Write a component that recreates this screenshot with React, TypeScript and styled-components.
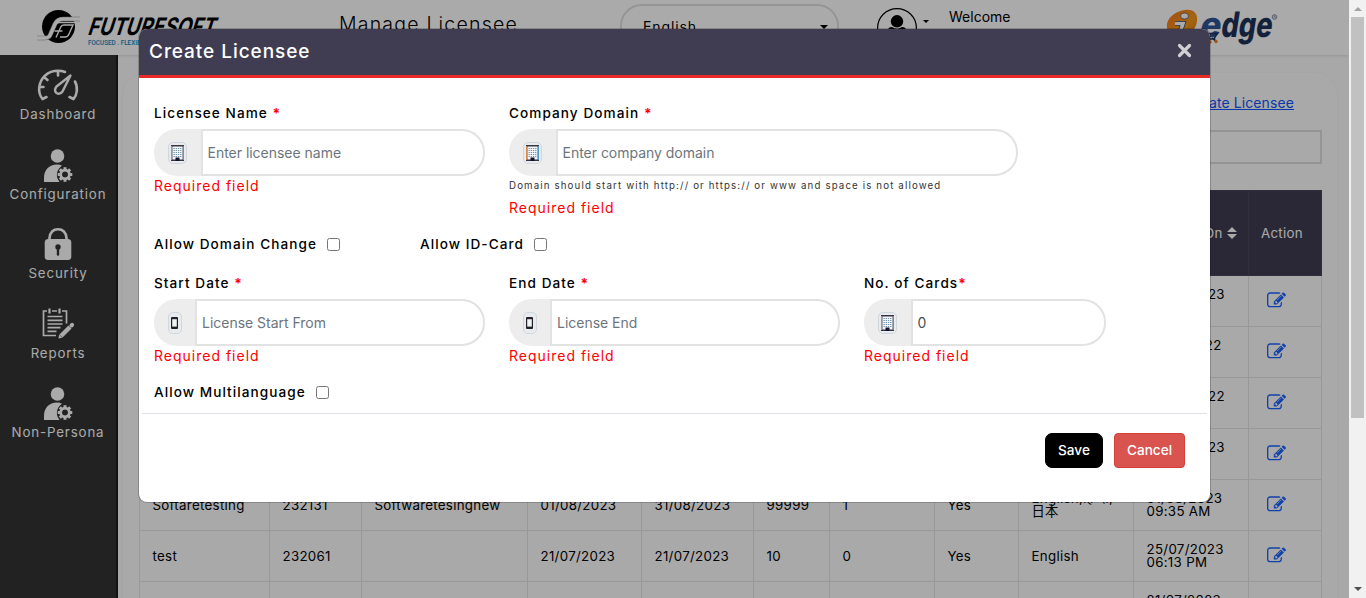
import React from "react";
import styled, { createGlobalStyle } from "styled-components";

const Global = createGlobalStyle`
  * { box-sizing: border-box; }
  body { margin: 0; overflow: hidden; font-family: Inter, "Noto Sans", "Noto Sans CJK JP", sans-serif; }
`;

const Window = styled.div`
  position: relative;
  display: flex;
  width: 1366px;
  height: 598px;
  overflow: hidden;
  background: #fff;
`;
const Page = styled.div`
  width: 1349px;
  height: 598px;
  overflow: hidden;
  background: #fdfdfd;
`;
const Header = styled.header`
  display: flex;
  align-items: flex-start;
  height: 55px;
  background: #fff;
  box-shadow: 0 1px 3px rgba(0, 0, 0, 0.12);
  > * { flex: none; }
`;
const BrandMark = styled.div`
  width: 339px;
  padding: 6px 0 0 32px;
  svg { display: block; }
`;
const ProductMark = styled.div`
  margin-top: 6px;
  svg { display: block; }
`;
const PageTitle = styled.h1`
  width: 281px;
  margin: 12px 0 0;
  font-size: 19.5px;
  line-height: 24px;
  font-weight: 300;
  letter-spacing: 1.2px;
  color: #000;
  white-space: nowrap;
`;
const LanguageSelect = styled.div`
  display: flex;
  justify-content: space-between;
  width: 219px;
  height: 46px;
  margin-top: 4px;
  padding: 11px 9px 0 21px;
  border: 2px solid #e0e0e0;
  border-radius: 22px;
  font-size: 14px;
  line-height: 20px;
  letter-spacing: 0.9px;
`;
const Caret = styled.span<{ $size: number; $top: number }>`
  width: 0;
  height: 0;
  margin-top: ${(p) => p.$top}px;
  border: ${(p) => p.$size}px solid transparent;
  border-top-color: #000;
  border-bottom: 0;
`;
const Avatar = styled.div`
  width: 40px;
  height: 40px;
  margin: 8px 6px 0 38px;
  svg { display: block; }
`;
const Welcome = styled.span`
  width: 215px;
  margin: 8px 0 0 20px;
  font-size: 14px;
  line-height: 18px;
`;
const Body = styled.div`
  display: flex;
  height: 543px;
`;
const Sidebar = styled.nav`
  width: 118px;
  flex: none;
  padding: 11px 0;
  background: #333;
  border-right: 2px solid #1c1a1e;
  color: #fff;
`;
const NavItem = styled.a`
  display: flex;
  flex-direction: column;
  align-items: center;
  height: 79.5px;
  svg { display: block; margin-bottom: 1px; }
`;
const NavLabel = styled.span`
  font-size: 13.3px;
  line-height: 16px;
  letter-spacing: 0.86px;
  white-space: nowrap;
`;
const Content = styled.main`
  flex: 1;
  padding: 18px 12px 0 5px;
`;
const Card = styled.section`
  height: 540px;
  padding: 20px 15px 0 16px;
  border-radius: 24px 24px 0 0;
  background: #fefefe;
  box-shadow: 0 0 6px rgba(0, 0, 0, 0.03);
`;
const LinkRow = styled.div`
  display: flex;
  justify-content: flex-end;
  height: 37px;
  padding-right: 28px;
`;
const CreateLink = styled.a`
  font-size: 14px;
  line-height: 20px;
  color: #0d55ff;
  text-decoration: underline;
  letter-spacing: 0.1px;
`;
const SearchBox = styled.div`
  height: 34px;
  border: 2px solid #dedede;
  margin-bottom: 26px;
`;
const Table = styled.table`
  width: 1183px;
  table-layout: fixed;
  border-collapse: collapse;
  font-size: 13.3px;
  line-height: 13px;
  letter-spacing: 0.3px;
`;
const HeadCell = styled.th`
  height: 85px;
  padding: 0 0 0 12px;
  background: #403d53;
  border: 1px solid #484558;
  color: #fff;
  font-weight: 400;
  text-align: left;
  white-space: nowrap;
`;
const Cell = styled.td`
  height: 51px;
  padding: 0 0 0 12.5px;
  border: 1px solid #e4e4e4;
  color: #000;
  white-space: pre;
`;
const HeadContent = styled.span`
  display: flex;
  align-items: center;
  gap: 4px;
  padding-left: 2px;
`;
const EditIconBox = styled.span`
  display: block;
  padding: 0 0 1px 5px;
  svg { display: block; }
`;

const ScrollTrack = styled.div`
  display: flex;
  flex-direction: column;
  align-items: center;
  justify-content: space-between;
  width: 17px;
  height: 598px;
  padding: 7px 2px;
  background: #f1f1f1;
`;
const ScrollThumb = styled.div`
  width: 13px;
  height: 401px;
  margin-top: 6px;
  margin-bottom: auto;
  background: #c1c1c1;
`;

const Overlay = styled.div`
  position: absolute;
  top: 0;
  left: 0;
  width: 1349px;
  height: 598px;
  padding: 29px 0 0 139px;
  background: rgba(0, 0, 0, 0.333);
`;
const Dialog = styled.div`
  width: 1071px;
  height: 473px;
  border-radius: 8px;
  background: #fff;
  box-shadow: 0 0 0 1px rgba(0, 0, 0, 0.2);
  overflow: hidden;
`;
const DialogHeader = styled.div`
  display: flex;
  justify-content: space-between;
  height: 49px;
  padding: 10px 19px 0 10px;
  background: #403d53;
  border-bottom: 3px solid #e92a26;
`;
const DialogTitle = styled.h2`
  margin: 0;
  font-size: 19px;
  line-height: 25px;
  font-weight: 500;
  letter-spacing: 0.95px;
  color: #fff;
`;
const CloseButton = styled.button`
  width: 15px;
  height: 15px;
  margin-top: 4px;
  margin-right: -1px;
  padding: 0;
  border: 0;
  background: none;
  svg { display: block; }
`;
const Form = styled.form`
  height: 336px;
  margin: 0 3px;
  padding: 25px 0 0 12px;
  border-bottom: 1px solid #dee2e6;
`;
const FieldRow = styled.div<{ $height: number }>`
  display: flex;
  height: ${(p) => p.$height}px;
`;
const Field = styled.div<{ $width: number }>`
  width: ${(p) => p.$width}px;
  flex: none;
`;
const Label = styled.label`
  display: block;
  height: 26px;
  font-size: 13.6px;
  line-height: 20px;
  font-weight: 550;
  letter-spacing: 1.06px;
  color: #000;
  white-space: nowrap;
  b { color: #f00; font-weight: 700; }
`;
const InputGroup = styled.div<{ $width: number }>`
  display: flex;
  width: ${(p) => p.$width}px;
  height: 47px;
`;
const Addon = styled.span<{ $width: number }>`
  display: flex;
  align-items: center;
  justify-content: center;
  width: ${(p) => p.$width}px;
  flex: none;
  border-radius: 23px 0 0 23px;
  background: #ededed;
`;
const IconBadge = styled.span<{ $width: number }>`
  display: flex;
  align-items: center;
  justify-content: center;
  width: ${(p) => p.$width}px;
  height: 22px;
  border: 1px solid #cfd6dd;
  border-radius: 5px;
  background: #e9ecef;
`;
const Input = styled.input`
  flex: 1;
  min-width: 0;
  padding: 0 5px;
  border: 2px solid #e2e2e2;
  border-radius: 0 23px 23px 0;
  font: 400 14px Inter, sans-serif;
  letter-spacing: -0.02px;
  color: #495057;
  background: #fff;
  &::placeholder { color: #6c757d; opacity: 1; }
`;
const Hint = styled.div`
  height: 22px;
  font-size: 9.7px;
  line-height: 20px;
  letter-spacing: 1.14px;
  color: #333;
`;
const ErrorText = styled.div`
  font-size: 14px;
  line-height: 20px;
  letter-spacing: 1px;
  color: #f00;
`;
const CheckField = styled.div<{ $width: number }>`
  display: flex;
  width: ${(p) => p.$width}px;
  height: 20px;
`;
const Checkbox = styled.input`
  width: 13px;
  height: 13px;
  margin: 4px 0 0 10px;
`;
const Footer = styled.div`
  display: flex;
  justify-content: flex-end;
  gap: 11px;
  padding: 19px 25px 0 0;
`;
const Button = styled.button<{ $danger?: boolean }>`
  width: ${(p) => (p.$danger ? 71 : 58)}px;
  height: 35px;
  padding: 0 0 1px;
  border: 1px solid ${(p) => (p.$danger ? "#d43f3a" : "#000")};
  border-radius: ${(p) => (p.$danger ? 4 : 7)}px;
  background: ${(p) => (p.$danger ? "#d9534f" : "#000")};
  color: #fff;
  font: 500 13.6px Inter, sans-serif;
`;

const FutureLogo = () => (
  <svg width="200" height="44" viewBox="32 6 200 44">
    <circle cx="58.5" cy="26.500" r="16.500" fill="#000" />
    <path d="M37 38h8c4 0 5-2 6-5l4-9c2-4 4-5 8-5h17" fill="none" stroke="#999" strokeWidth="4.600" strokeLinejoin="round" />
    <path d="M36.500 38H45c4 0 5-2 6-5l4-9c2-4 4-5 8-5h17.500" fill="none" stroke="#fff" strokeWidth="3.400" />
    <path d="M50 37.500l5-12q1-3 4-3h17M56 37.500l5-11q1-1.500 3-1.500h9l-4 9q-1 3-4 3h-5M54.500 31h8" fill="none" stroke="#fff" strokeWidth="1.400" />
    <g transform="translate(87 34.700) skewX(-18)">
      <text x="0" y="0" fontFamily="Inter" fontSize="24" fontWeight="700" textLength="127" lengthAdjust="spacingAndGlyphs">FUTURESOFT</text>
    </g>
    <text x="88" y="45.300" fontFamily="Roboto" fontSize="7.600" fontWeight="500" fill="#1688c4" textLength="60" lengthAdjust="spacingAndGlyphs">FOCUSED . FLEXIBLE</text>
  </svg>
);

const EdgeLogo = () => (
  <svg width="116" height="44" viewBox="1164 6 116 44">
    <defs>
      <linearGradient id="flame" x1="0" y1="0" x2="1" y2="1">
        <stop offset="0" stopColor="#ff6f1c" />
        <stop offset=".6" stopColor="#f49a18" />
        <stop offset="1" stopColor="#e8661c" />
      </linearGradient>
    </defs>
    <path d="M1167 27c-1-8 8-16 18-17 9-1 13 4 12 11-1 9-8 15-18 16-7 0-12-3-12-10z" fill="url(#flame)" />
    <ellipse cx="1184.500" cy="16" rx="4" ry="3" fill="#fff" stroke="#243c68" strokeWidth=".6" />
    <path d="M1175 23.500h8l-3 9q0 3 6 0" fill="none" stroke="#243c68" strokeWidth="5" />
    <path d="M1175 23.500h8l-3 9q0 3 6 0" fill="none" stroke="#fff" strokeWidth="3.600" />
    <g transform="translate(1199 36.500) skewX(-9)" fontFamily="Inter" fontSize="35" fontWeight="800">
      <text x="0" y="0" fill="#2f5596" textLength="21" lengthAdjust="spacingAndGlyphs">e</text>
      <text x="21" y="0" fill="#1d3259" textLength="51" lengthAdjust="spacingAndGlyphs">dge</text>
    </g>
    <path d="M1203 33.500h14l-3 5.500h-6M1212 38l4 3" fill="none" stroke="#1d3259" strokeWidth="1.600" />
    <circle cx="1210" cy="42" r="1.700" fill="#f0802c" />
    <circle cx="1216" cy="41.500" r="1.700" fill="#f0802c" />
    <circle cx="1274.500" cy="17" r="2.300" fill="none" stroke="#506080" strokeWidth=".7" />
    <path d="M1274 18.300v-2.500h1v1.200l.7 1.300" fill="none" stroke="#506080" strokeWidth=".5" />
  </svg>
);

const GaugeIcon = () => (
  <svg width="44" height="39" viewBox="0 0 44 39" fill="none" stroke="#fff" strokeWidth="2.600" strokeLinecap="round">
    <path d="M6.500 33Q2.600 28 3.200 22C4 11.500 12 4.700 22 4.700q4 0 7 1.300M39 15.500q2.300 4 1.800 9.500-.5 5-3.300 8M6.500 33l4-2M37.500 33l-4-2M22 5v4.500M4 21h3.500M8.500 11.500l3 2.500" />
    <path d="M34.500 9.500L20.500 20.500q-3 4 0 6.500 3.500 2 6-1.500z" strokeWidth="2.400" strokeLinejoin="round" />
  </svg>
);
const teeth = Array.from({ length: 8 }, (_, i) => i * 45);
const UserGearIcon = () => (
  <svg width="30" height="39" viewBox="0 0 30 39">
    <circle cx="14.500" cy="10" r="6.800" fill="#fff" />
    <path d="M1 36V32C1 24 6 18.500 14 18.500q3 0 5 1.200C14.500 22.500 12.500 28.500 15 33.500l1.500 2.500z" fill="#fff" />
    <g transform="translate(22 28.500)">
      {teeth.map((a) => <rect key={a} x="-1.500" y="-7.300" width="3" height="4" fill="#fff" transform={`rotate(${a})`} />)}
      <circle r="4.300" fill="none" stroke="#fff" strokeWidth="2.700" />
    </g>
  </svg>
);
const LockIcon = () => (
  <svg width="30" height="39" viewBox="0 0 30 39">
    <path d="M6.500 18v-5Q7.500 4.300 15 4.300t8.500 8.700v5" fill="none" stroke="#fff" strokeWidth="2.600" />
    <rect x="1.700" y="14" width="26.600" height="21" rx="3.500" fill="#fff" />
    <circle cx="15" cy="22" r="2.700" fill="#333" />
    <path d="M15 23v6.500" stroke="#333" strokeWidth="2.400" strokeLinecap="round" />
  </svg>
);
const ReportIcon = () => (
  <svg width="32" height="39" viewBox="0 0 32 39" fill="none" stroke="#fff" strokeWidth="1.700">
    <path d="M5 6H1.500v24.500H14M10 6h5M20 6h4.500v12.500" />
    <path d="M7.500 3.500v5M17.500 3.500v5" strokeWidth="2.200" />
    <path d="M5.500 11.500h15M5.500 15.300h15M5.500 19h15M5.500 22.700h13M5.500 26.400h9" />
    <path d="M19 31L28 22" strokeWidth="4.500" />
    <path d="M29.500 20.500l.6-.6" strokeWidth="4" strokeLinecap="round" />
    <path d="M16.500 33.500l.6-4 3.200 3.200z" fill="#fff" stroke="none" />
  </svg>
);
const SortIcon = () => (
  <svg width="10" height="12" viewBox="0 0 10 12" fill="#fff"><path d="M0 5l5-5 5 5zM0 7l5 5 5-5z" /></svg>
);
const EditIcon = () => (
  <svg width="19" height="19" viewBox="0 0 1792 1792" fill="#1a63ff">
    <path d="M888 1184l116-116-152-152-116 116v56h96v96h56zm440-720q-16-16-33 1l-350 350q-17 17-1 33t33-1l350-350q17-17 1-33zm80 594v190q0 119-84.500 203.500t-203.500 84.500h-832q-119 0-203.500-84.500t-84.500-203.500v-832q0-119 84.500-203.500t203.500-84.500h832q63 0 117 25 15 7 18 23 3 17-9 29l-49 49q-14 14-32 8-23-6-45-6h-832q-66 0-113 47t-47 113v832q0 66 47 113t113 47h832q66 0 113-47t47-113v-126q0-13 9-22l64-64q15-15 35-7t20 29zm-96-738l288 288-672 672h-288v-288zm444 132l-92 92-288-288 92-92q28-28 68-28t68 28l152 152q28 28 28 68t-28 68z" />
  </svg>
);
const BuildingIcon = () => (
  <svg width="13" height="16" viewBox="0 0 13 16">
    <path d="M.7.700h11.600v14.600H.7z" fill="#f3f7fa" stroke="#3b3342" strokeWidth="1.400" />
    <path d="M.5 1v14" stroke="#d98b4b" />
    <path d="M12.500 1v14" stroke="#4b9bd0" />
    <path d="M2.500 3.500h8M2.500 5.500h8M2.500 7.500h8M2.500 9.500h8M2.500 11.500h8" stroke="#6f93ad" strokeDasharray="1.300 .9" />
    <path d="M4.500 12.500h4V16h-4z" fill="#10142e" />
  </svg>
);
const PhoneIcon = () => (
  <svg width="7" height="12" viewBox="0 0 7 12">
    <rect width="7" height="12" rx="1" fill="#25202c" />
    <path d="M1.200 2.200h4.600v7.400H1.200z" fill="#eef5f2" />
  </svg>
);

type FieldProps = {
  label: string;
  width: number;
  group: number;
  phone?: boolean;
  placeholder?: string;
  value?: string;
  hint?: string;
  tight?: boolean;
};
const TextField = ({ label, width, group, phone, placeholder, value, hint, tight }: FieldProps) => (
  <Field $width={width}>
    <Label>{label}{tight ? "" : " "}<b>*</b></Label>
    <InputGroup $width={group}>
      <Addon $width={phone ? 41 : 46.5}>
        <IconBadge $width={phone ? 14 : 19}>{phone ? <PhoneIcon /> : <BuildingIcon />}</IconBadge>
      </Addon>
      <Input placeholder={placeholder} defaultValue={value} />
    </InputGroup>
    {hint && <Hint>{hint}</Hint>}
    <ErrorText>Required field</ErrorText>
  </Field>
);
const CheckItem = ({ label, width }: { label: string; width: number }) => (
  <CheckField $width={width}>
    <Label>{label}</Label>
    <Checkbox type="checkbox" />
  </CheckField>
);

const columns = [130, 92, 166, 114, 112, 76, 105, 84, 115, 115, 73];
const blank = ["", "", "", "", "", "", "", "", ""];
const rows = [
  [...blank, "28/08/2023\n "],
  [...blank, "23/12/2022\n "],
  [...blank, "26/09/2022\n "],
  [...blank, "28/08/2023\n10:08 AM"],
  ["Softaretesting", "232131", "Softwaretesingnew", "01/08/2023", "31/08/2023", "99999", "1", "Yes", "English,हिन्दी,\n日本", "01/08/2023\n09:35 AM"],
  ["test", "232061", "", "21/07/2023", "21/07/2023", "10", "0", "Yes", "English", "25/07/2023\n06:13 PM"],
  [...blank, "21/07/2023\n "],
];
const nav: [string, React.ReactNode][] = [
  ["Dashboard", <GaugeIcon />],
  ["Configuration", <UserGearIcon />],
  ["Security", <LockIcon />],
  ["Reports", <ReportIcon />],
  ["Non-Persona", <UserGearIcon />],
];

export default function App() {
  return (
    <>
      <Global />
      <Window>
        <Page>
          <Header>
            <BrandMark><FutureLogo /></BrandMark>
            <PageTitle>Manage Licensee</PageTitle>
            <LanguageSelect>English<Caret $size={4.5} $top={8} /></LanguageSelect>
            <Avatar>
              <svg width="40" height="40" viewBox="0 0 40 40">
                <circle cx="20" cy="20" r="19.400" fill="none" stroke="#000" strokeWidth="1.200" />
                <circle cx="20" cy="13.300" r="6.200" />
                <path d="M11 22q0-3 4-3 5 3.500 10 0 4 0 4 3v7H11z" />
              </svg>
            </Avatar>
            <Caret $size={3} $top={20} />
            <Welcome>Welcome</Welcome>
            <ProductMark><EdgeLogo /></ProductMark>
          </Header>
          <Body>
            <Sidebar>
              {nav.map(([label, icon]) => (
                <NavItem key={label}>{icon}<NavLabel>{label}</NavLabel></NavItem>
              ))}
            </Sidebar>
            <Content>
              <Card>
                <LinkRow><CreateLink>Create Licensee</CreateLink></LinkRow>
                <SearchBox />
                <Table>
                  <colgroup>{columns.map((w, i) => <col key={i} style={{ width: w }} />)}</colgroup>
                  <thead>
                    <tr>
                      {columns.map((_, i) => (
                        <HeadCell key={i}>
                          {i === 9 && <HeadContent>Created On<SortIcon /></HeadContent>}
                          {i === 10 && "Action"}
                        </HeadCell>
                      ))}
                    </tr>
                  </thead>
                  <tbody>
                    {rows.map((row, r) => (
                      <tr key={r}>
                        {row.map((text, c) => <Cell key={c}>{text}</Cell>)}
                        <Cell><EditIconBox><EditIcon /></EditIconBox></Cell>
                      </tr>
                    ))}
                  </tbody>
                </Table>
              </Card>
            </Content>
          </Body>
        </Page>
        <ScrollTrack>
          <svg width="8" height="4" viewBox="0 0 8 4"><path d="M0 4l4-4 4 4z" fill="#a3a3a3" /></svg>
          <ScrollThumb />
          <svg width="8" height="4" viewBox="0 0 8 4"><path d="M0 0l4 4 4-4z" fill="#505050" /></svg>
        </ScrollTrack>
        <Overlay>
          <Dialog>
            <DialogHeader>
              <DialogTitle>Create Licensee</DialogTitle>
              <CloseButton aria-label="Close">
                <svg width="15" height="15" viewBox="0 0 15 15"><path d="M2.500 2.500l10 10M12.500 2.500l-10 10" stroke="#d2cfd2" strokeWidth="3.200" strokeLinecap="round" /></svg>
              </CloseButton>
            </DialogHeader>
            <Form>
              <FieldRow $height={131}>
                <TextField label="Licensee Name" width={355} group={331} placeholder="Enter licensee name" />
                <TextField label="Company Domain" width={520} group={509} placeholder="Enter company domain" hint="Domain should start with http:// or https:// or www and space is not allowed" />
              </FieldRow>
              <FieldRow $height={39}>
                <CheckItem label="Allow Domain Change" width={266} />
                <CheckItem label="Allow ID-Card" width={200} />
              </FieldRow>
              <FieldRow $height={109}>
                <TextField label="Start Date" width={355} group={331} phone placeholder="License Start From" />
                <TextField label="End Date" width={355} group={331} phone placeholder="License End" />
                <TextField label="No. of Cards" width={300} group={242} value="0" tight />
              </FieldRow>
              <CheckItem label="Allow Multilanguage" width={266} />
            </Form>
            <Footer>
              <Button>Save</Button>
              <Button $danger>Cancel</Button>
            </Footer>
          </Dialog>
        </Overlay>
      </Window>
    </>
  );
}
